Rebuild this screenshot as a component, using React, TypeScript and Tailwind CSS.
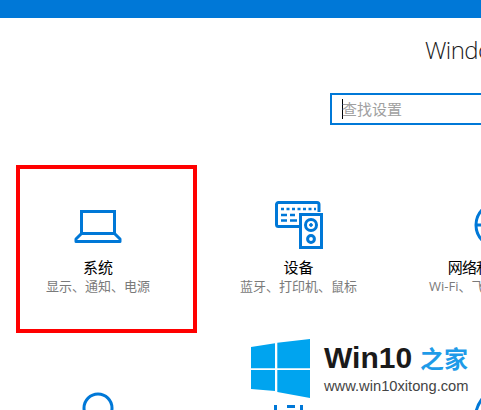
const FONT = "font-['Open_Sans','Noto_Sans_CJK_SC',sans-serif]";

function Laptop() {
  return (
    <svg viewBox="0 0 48 48" className="h-12 w-12" fill="none" stroke="#0078d7" strokeWidth="3">
      <path d="M7.5 32V10.5H40.5V32" />
      <path d="M7.5 32.5H40.5L46 38V40.5H2V38Z" strokeLinejoin="round" />
    </svg>
  );
}

function Devices() {
  return (
    <svg viewBox="0 0 48 48" className="h-12 w-12" fill="none" stroke="#0078d7">
      <path d="M24 25.5H3.5a2 2 0 0 1-2-2V3.5a2 2 0 0 1 2-2H42a2 2 0 0 1 2 2V11" strokeWidth="3" />
      <path d="M6 8H9M11.5 8H14.5M17 8H20M22.5 8H25.5M28 8H31M33.5 8H36.5M39 8H41" strokeWidth="2.6" />
      <path d="M6 14H12M15 14H20M6 19.5H12M15 19.5H22" strokeWidth="2.6" />
      <rect x="25.5" y="13.5" width="21" height="33" strokeWidth="3" />
      <circle cx="36" cy="24" r="5.5" strokeWidth="3" />
      <circle cx="36" cy="24" r="1.4" fill="#0078d7" strokeWidth="1" />
      <circle cx="36" cy="38" r="3.4" strokeWidth="3" />
    </svg>
  );
}

function Globe() {
  return (
    <svg viewBox="0 0 48 48" className="h-12 w-12 overflow-visible" fill="none" stroke="#0078d7" strokeWidth="3">
      <circle cx="26" cy="24" r="22" />
      <ellipse cx="26" cy="24" rx="10" ry="22" />
      <path d="M4 24H48" />
    </svg>
  );
}

function Person() {
  return (
    <svg viewBox="0 0 48 48" className="h-12 w-12" fill="none" stroke="#0078d7" strokeWidth="3">
      <circle cx="24" cy="16" r="14" />
    </svg>
  );
}

function Ticks() {
  return (
    <svg viewBox="0 0 48 48" className="h-12 w-12" fill="#0078d7">
      <rect x="9" y="13" width="3" height="6" />
      <rect x="22" y="13" width="8" height="3" />
      <rect x="35" y="13" width="3" height="6" />
    </svg>
  );
}

function Arc() {
  return (
    <svg viewBox="0 0 48 48" className="h-12 w-12 overflow-visible" fill="none" stroke="#0078d7" strokeWidth="3">
      <path d="M2 20C3 15 5 11 8 7" />
    </svg>
  );
}

function Item({
  width,
  icon,
  title,
  sub,
  tight,
}: {
  width: string;
  icon: React.ReactNode;
  title?: string;
  sub?: string;
  tight?: boolean;
}) {
  return (
    <div className={`flex shrink-0 flex-col items-center ${width}`}>
      {icon}
      {title && (
        <div
          className={`mt-2 h-5 whitespace-nowrap text-[15px] leading-5 text-black ${tight ? "tracking-[-0.8px]" : ""}`}
        >
          {title}
        </div>
      )}
      {sub && <div className="h-[18px] whitespace-nowrap text-[13px] leading-[18px] text-[#7a7a7a]">{sub}</div>}
    </div>
  );
}

export default function App() {
  return (
    <div className={`relative h-[410px] w-[481px] overflow-hidden bg-white ${FONT}`}>
      <div className="h-[18px] bg-[#0078d7]" />

      <div className="mt-[14px] ml-[425px] h-[36px] whitespace-nowrap text-[24px] leading-[36px] font-light tracking-[-0.6px] text-[#1a1a1a]">
        Windows 设置
      </div>

      <div className="mt-[25px] ml-[330px] flex h-8 w-[300px] items-center border-2 border-[#0078d7] pl-[10px]">
        <div className="h-5 w-px shrink-0 bg-black" />
        <span className="-ml-px text-[15px] leading-5 text-[#a0a0a0]">查找设置</span>
      </div>

      <div className="mt-[76px] flex">
        <Item width="w-[196px]" icon={<Laptop />} title="系统" sub="显示、通知、电源" />
        <Item width="w-[205px]" icon={<Devices />} title="设备" sub="蓝牙、打印机、鼠标" />
        <Item width="w-[189px]" icon={<Globe />} title="网络和 Internet" sub="Wi-Fi、飞行模式、VPN" tight />
      </div>

      <div className="mt-[97px] flex">
        <Item width="w-[196px]" icon={<Person />} />
        <Item width="w-[186px]" icon={<Ticks />} />
        <Item width="w-[232px]" icon={<Arc />} />
      </div>

      <div className="absolute top-[165px] left-4 h-[168px] w-[181px] border-4 border-[#ff0000]" />

      <div className="absolute top-[339px] left-[251px] flex">
        <svg viewBox="0 0 59 59" className="h-[59px] w-[59px]" fill="#00a4ef">
          <polygon points="0,8 24,4.3 24,29.3 0,29.3" />
          <polygon points="26.3,3.7 59,0 59,29.3 26.3,29.3" />
          <polygon points="0,31 24,31 24,52 0,50" />
          <polygon points="26.3,31 59,31 59,59 26.3,53" />
        </svg>
        <div className="ml-[14px] flex flex-col">
          <div className="flex h-[38px] items-center">
            <span className="font-['Liberation_Sans',sans-serif] text-[30px] leading-[38px] font-bold text-[#1a1a1a]">
              Win10
            </span>
            <span className="ml-[8px] font-['Noto_Sans_CJK_SC',sans-serif] text-[24px] leading-[38px] font-bold text-[#1e9be8]">
              之家
            </span>
          </div>
          <div className="mt-[1px] font-['Liberation_Sans',sans-serif] text-[14.7px] leading-4 whitespace-nowrap text-[#444444]">
            www.win10xitong.com
          </div>
        </div>
      </div>
    </div>
  );
}
